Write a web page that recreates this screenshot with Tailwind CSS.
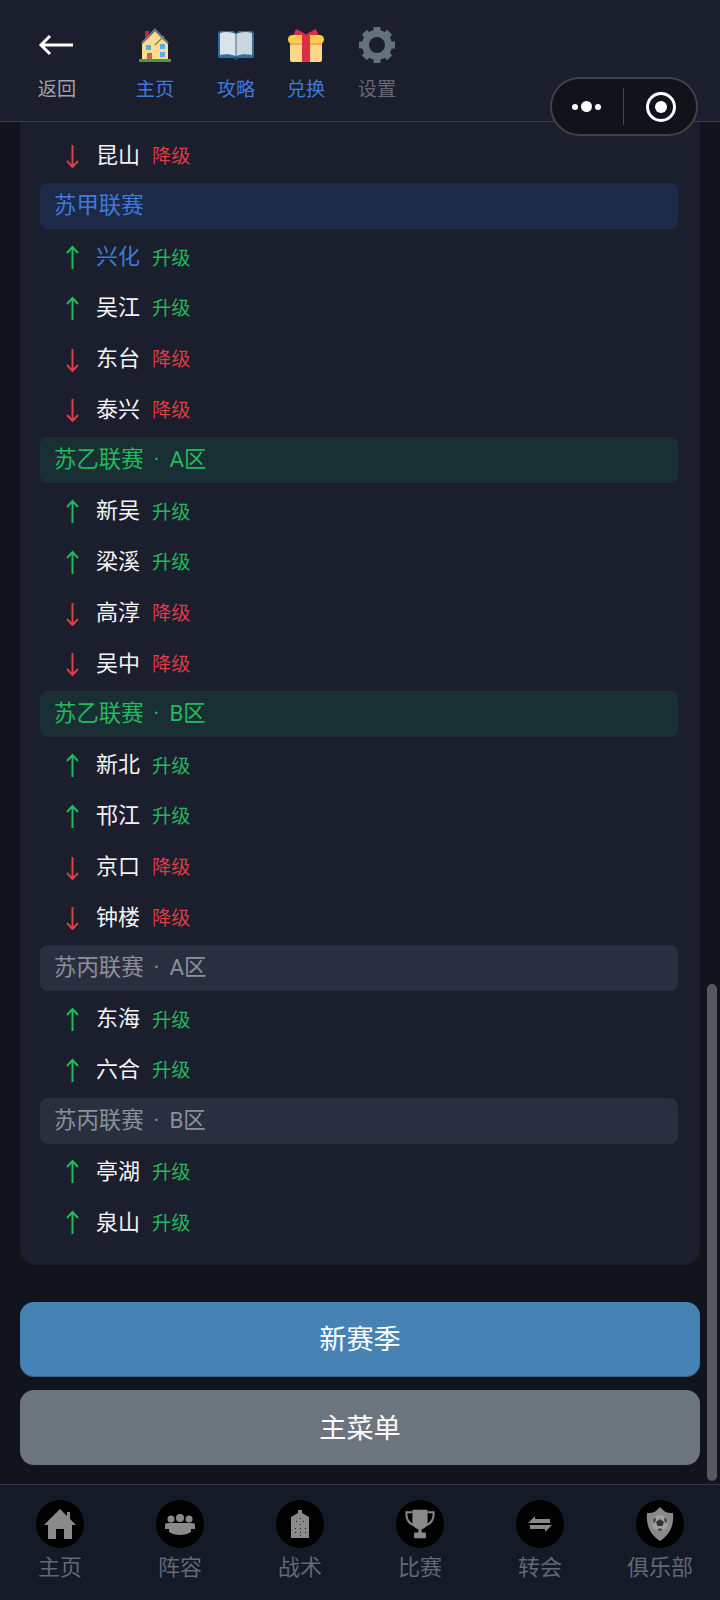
<!DOCTYPE html>
<html lang="zh-CN">
<head>
  <meta charset="UTF-8">
  <meta name="viewport" content="width=device-width, initial-scale=1.0">
  <title>赛季结算</title>
  <script src="https://cdn.jsdelivr.net/npm/@tailwindcss/browser@4"></script>
</head>
<body class="bg-[#11141c] font-['Roboto','Noto_Sans_CJK_SC',sans-serif]">
  <div class="relative w-[720px] h-[1600px] overflow-hidden flex flex-col">

    <!-- top bar -->
    <header class="h-[122px] shrink-0 bg-[#1a1e2d] border-b border-[#3a3e4b] flex items-start pt-[26px] pl-[37px]">
      <div class="w-[40px] flex flex-col items-center">
        <svg class="h-[38px] w-[40px]" viewBox="0 0 40 38" fill="none" stroke="#fff" stroke-width="3"><path d="M4 19H36M13 10L4 19L13 28"/></svg>
        <span class="mt-[14px] text-[19.2px] leading-[24px] text-[#9ea1ab]">返回</span>
      </div>
      <div class="ml-[58px] w-[40px] flex flex-col items-center">
        <svg class="h-[38px] w-[40px]" viewBox="0 0 40 38">
          <path d="M10 5h4v8h-4z" fill="#c0273d"/>
          <path d="M7 16L20 3L33 16V33H7z" fill="#ffdc8e"/>
          <path d="M6 17L20 2L34 17L32.500 18L20 5.500L7.500 18z" fill="#66757f"/>
          <path d="M20 19L29 10" stroke="#8a7f6a" stroke-width="1.500"/>
          <path d="M11 19h5v5h-5zM25 18h5v5h-5zM25 26h5v5h-5z" fill="#55acee"/>
          <path d="M12 27h5v7h-5z" fill="#c1694f"/>
          <path d="M4 33h32v3H4z" fill="#5c913b"/>
        </svg>
        <span class="mt-[14px] text-[19.2px] leading-[24px] text-[#3f79dc]">主页</span>
      </div>
      <div class="ml-[41px] w-[40px] flex flex-col items-center">
        <svg class="h-[38px] w-[40px]" viewBox="0 0 40 38">
          <path d="M2 8C2 6 3 5 5 5H17L20 7L23 5H35C37 5 38 6 38 8V30C38 31 37 32 36 32H23L20 34L17 32H4C3 32 2 31 2 30z" fill="#2f6f9f"/>
          <path d="M4 7C10 5 16 6 19.500 8V30C15 28 9 28 4 29z" fill="#dbe3ea"/>
          <path d="M36 7C30 5 24 6 20.500 8V30C25 28 31 28 36 29z" fill="#ccd6dd"/>
          <path d="M18 31h4v2h-4z" fill="#1f4f70"/>
        </svg>
        <span class="mt-[14px] text-[19.2px] leading-[24px] text-[#3f79dc]">攻略</span>
      </div>
      <div class="ml-[30px] w-[40px] flex flex-col items-center">
        <svg class="h-[38px] w-[40px]" viewBox="0 0 40 38">
          <path d="M7 10L10 3L18 7L20 9L22 7L30 3L33 10z" fill="#dd2e44"/>
          <rect x="4" y="15" width="32" height="21" rx="2" fill="#fdd888"/>
          <rect x="2" y="9" width="36" height="9" rx="4.500" fill="#ffcc4d"/>
          <rect x="4" y="17" width="32" height="2" fill="#f4a94e"/>
          <rect x="16" y="9" width="8" height="27" fill="#dd2e44"/>
        </svg>
        <span class="mt-[14px] text-[19.2px] leading-[24px] text-[#3f79dc]">兑换</span>
      </div>
      <div class="ml-[31px] w-[40px] flex flex-col items-center">
        <svg class="h-[38px] w-[40px]" viewBox="0 0 40 38" fill="none" stroke="#66717e">
          <circle cx="20" cy="19" r="11.500" stroke-width="7"/>
          <path d="M20 1V8M20 30V37M2 19H9M31 19H38M7.300 6.300L12 11M28 27L32.700 31.700M7.300 31.700L12 27M28 11L32.700 6.300" stroke-width="7"/>
        </svg>
        <span class="mt-[14px] text-[19.2px] leading-[24px] text-[#646975]">设置</span>
      </div>
    </header>

    <!-- wechat capsule -->
    <div class="absolute left-[550px] top-[77px] w-[148px] h-[59px] rounded-full bg-[#10131a] border-2 border-[#3f424b] flex items-center">
      <div class="w-[71px] pr-[3px] flex items-center justify-center gap-[3px]">
        <span class="size-[6px] rounded-full bg-white"></span>
        <span class="size-[11px] rounded-full bg-white"></span>
        <span class="size-[6px] rounded-full bg-white"></span>
      </div>
      <div class="w-px h-[37px] bg-[#45484f]"></div>
      <div class="flex-1 pl-[2px] flex justify-center">
        <div class="size-[30px] rounded-full border-[3px] border-white flex items-center justify-center">
          <span class="size-[12px] rounded-full bg-white"></span>
        </div>
      </div>
    </div>

    <!-- scrolled content -->
    <main class="flex-1 min-h-0 px-[20px] flex flex-col">
      <section class="bg-[#1a1e2d] rounded-b-[16px] pl-[20px] pr-[22px] pt-[8px] pb-[17px]">
        <div class="h-[50.8px] flex items-center pl-[26px]">
          <svg class="w-[13px] h-[24px] translate-y-[1px]" viewBox="0 0 13 24" fill="none" stroke="#dc3d46" stroke-width="2"><path d="M6.500 1V22.500M1 17L6.500 23L12 17"/></svg>
          <span class="ml-[17px] text-[22px] text-[#f4f4f6]">昆山</span>
          <span class="ml-[12px] text-[19.2px] translate-y-[2px] text-[#dc3d46]">降级</span>
        </div>

        <div class="h-[50.8px] flex items-center"><div class="w-full h-[46px] rounded-[8px] bg-[#1d2a47] px-[14px] flex items-center text-[22.4px] text-[#3f79dc]">苏甲联赛</div></div>
        <div class="h-[50.8px] flex items-center pl-[26px]">
          <svg class="w-[13px] h-[24px]" viewBox="0 0 13 24" fill="none" stroke="#22b95c" stroke-width="2"><path d="M6.500 24V2M1 8L6.500 2L12 8"/></svg>
          <span class="ml-[17px] text-[22px] text-[#3f79dc]">兴化</span>
          <span class="ml-[12px] text-[19.2px] translate-y-[2px] text-[#22b95c]">升级</span>
        </div>
        <div class="h-[50.8px] flex items-center pl-[26px]">
          <svg class="w-[13px] h-[24px]" viewBox="0 0 13 24" fill="none" stroke="#22b95c" stroke-width="2"><path d="M6.500 24V2M1 8L6.500 2L12 8"/></svg>
          <span class="ml-[17px] text-[22px] text-[#f4f4f6]">吴江</span>
          <span class="ml-[12px] text-[19.2px] translate-y-[2px] text-[#22b95c]">升级</span>
        </div>
        <div class="h-[50.8px] flex items-center pl-[26px]">
          <svg class="w-[13px] h-[24px] translate-y-[1px]" viewBox="0 0 13 24" fill="none" stroke="#dc3d46" stroke-width="2"><path d="M6.500 1V22.500M1 17L6.500 23L12 17"/></svg>
          <span class="ml-[17px] text-[22px] text-[#f4f4f6]">东台</span>
          <span class="ml-[12px] text-[19.2px] translate-y-[2px] text-[#dc3d46]">降级</span>
        </div>
        <div class="h-[50.8px] flex items-center pl-[26px]">
          <svg class="w-[13px] h-[24px] translate-y-[1px]" viewBox="0 0 13 24" fill="none" stroke="#dc3d46" stroke-width="2"><path d="M6.500 1V22.500M1 17L6.500 23L12 17"/></svg>
          <span class="ml-[17px] text-[22px] text-[#f4f4f6]">泰兴</span>
          <span class="ml-[12px] text-[19.2px] translate-y-[2px] text-[#dc3d46]">降级</span>
        </div>

        <div class="h-[50.8px] flex items-center"><div class="w-full h-[46px] rounded-[8px] bg-[#1a2f33] px-[14px] flex items-center text-[22.4px] text-[#22b95c]"><span>苏乙联赛</span><span class="mx-[10px]">·</span><span>A区</span></div></div>
        <div class="h-[50.8px] flex items-center pl-[26px]">
          <svg class="w-[13px] h-[24px]" viewBox="0 0 13 24" fill="none" stroke="#22b95c" stroke-width="2"><path d="M6.500 24V2M1 8L6.500 2L12 8"/></svg>
          <span class="ml-[17px] text-[22px] text-[#f4f4f6]">新吴</span>
          <span class="ml-[12px] text-[19.2px] translate-y-[2px] text-[#22b95c]">升级</span>
        </div>
        <div class="h-[50.8px] flex items-center pl-[26px]">
          <svg class="w-[13px] h-[24px]" viewBox="0 0 13 24" fill="none" stroke="#22b95c" stroke-width="2"><path d="M6.500 24V2M1 8L6.500 2L12 8"/></svg>
          <span class="ml-[17px] text-[22px] text-[#f4f4f6]">梁溪</span>
          <span class="ml-[12px] text-[19.2px] translate-y-[2px] text-[#22b95c]">升级</span>
        </div>
        <div class="h-[50.8px] flex items-center pl-[26px]">
          <svg class="w-[13px] h-[24px] translate-y-[1px]" viewBox="0 0 13 24" fill="none" stroke="#dc3d46" stroke-width="2"><path d="M6.500 1V22.500M1 17L6.500 23L12 17"/></svg>
          <span class="ml-[17px] text-[22px] text-[#f4f4f6]">高淳</span>
          <span class="ml-[12px] text-[19.2px] translate-y-[2px] text-[#dc3d46]">降级</span>
        </div>
        <div class="h-[50.8px] flex items-center pl-[26px]">
          <svg class="w-[13px] h-[24px] translate-y-[1px]" viewBox="0 0 13 24" fill="none" stroke="#dc3d46" stroke-width="2"><path d="M6.500 1V22.500M1 17L6.500 23L12 17"/></svg>
          <span class="ml-[17px] text-[22px] text-[#f4f4f6]">吴中</span>
          <span class="ml-[12px] text-[19.2px] translate-y-[2px] text-[#dc3d46]">降级</span>
        </div>

        <div class="h-[50.8px] flex items-center"><div class="w-full h-[46px] rounded-[8px] bg-[#1a2f33] px-[14px] flex items-center text-[22.4px] text-[#22b95c]"><span>苏乙联赛</span><span class="mx-[10px]">·</span><span>B区</span></div></div>
        <div class="h-[50.8px] flex items-center pl-[26px]">
          <svg class="w-[13px] h-[24px]" viewBox="0 0 13 24" fill="none" stroke="#22b95c" stroke-width="2"><path d="M6.500 24V2M1 8L6.500 2L12 8"/></svg>
          <span class="ml-[17px] text-[22px] text-[#f4f4f6]">新北</span>
          <span class="ml-[12px] text-[19.2px] translate-y-[2px] text-[#22b95c]">升级</span>
        </div>
        <div class="h-[50.8px] flex items-center pl-[26px]">
          <svg class="w-[13px] h-[24px]" viewBox="0 0 13 24" fill="none" stroke="#22b95c" stroke-width="2"><path d="M6.500 24V2M1 8L6.500 2L12 8"/></svg>
          <span class="ml-[17px] text-[22px] text-[#f4f4f6]">邗江</span>
          <span class="ml-[12px] text-[19.2px] translate-y-[2px] text-[#22b95c]">升级</span>
        </div>
        <div class="h-[50.8px] flex items-center pl-[26px]">
          <svg class="w-[13px] h-[24px] translate-y-[1px]" viewBox="0 0 13 24" fill="none" stroke="#dc3d46" stroke-width="2"><path d="M6.500 1V22.500M1 17L6.500 23L12 17"/></svg>
          <span class="ml-[17px] text-[22px] text-[#f4f4f6]">京口</span>
          <span class="ml-[12px] text-[19.2px] translate-y-[2px] text-[#dc3d46]">降级</span>
        </div>
        <div class="h-[50.8px] flex items-center pl-[26px]">
          <svg class="w-[13px] h-[24px] translate-y-[1px]" viewBox="0 0 13 24" fill="none" stroke="#dc3d46" stroke-width="2"><path d="M6.500 1V22.500M1 17L6.500 23L12 17"/></svg>
          <span class="ml-[17px] text-[22px] text-[#f4f4f6]">钟楼</span>
          <span class="ml-[12px] text-[19.2px] translate-y-[2px] text-[#dc3d46]">降级</span>
        </div>

        <div class="h-[50.8px] flex items-center"><div class="w-full h-[46px] rounded-[8px] bg-[#2a2f3f] px-[14px] flex items-center text-[22.4px] text-[#8b8f9b]"><span>苏丙联赛</span><span class="mx-[10px]">·</span><span>A区</span></div></div>
        <div class="h-[50.8px] flex items-center pl-[26px]">
          <svg class="w-[13px] h-[24px]" viewBox="0 0 13 24" fill="none" stroke="#22b95c" stroke-width="2"><path d="M6.500 24V2M1 8L6.500 2L12 8"/></svg>
          <span class="ml-[17px] text-[22px] text-[#f4f4f6]">东海</span>
          <span class="ml-[12px] text-[19.2px] translate-y-[2px] text-[#22b95c]">升级</span>
        </div>
        <div class="h-[50.8px] flex items-center pl-[26px]">
          <svg class="w-[13px] h-[24px]" viewBox="0 0 13 24" fill="none" stroke="#22b95c" stroke-width="2"><path d="M6.500 24V2M1 8L6.500 2L12 8"/></svg>
          <span class="ml-[17px] text-[22px] text-[#f4f4f6]">六合</span>
          <span class="ml-[12px] text-[19.2px] translate-y-[2px] text-[#22b95c]">升级</span>
        </div>

        <div class="h-[50.8px] flex items-center"><div class="w-full h-[46px] rounded-[8px] bg-[#2a2f3f] px-[14px] flex items-center text-[22.4px] text-[#8b8f9b]"><span>苏丙联赛</span><span class="mx-[10px]">·</span><span>B区</span></div></div>
        <div class="h-[50.8px] flex items-center pl-[26px]">
          <svg class="w-[13px] h-[24px]" viewBox="0 0 13 24" fill="none" stroke="#22b95c" stroke-width="2"><path d="M6.500 24V2M1 8L6.500 2L12 8"/></svg>
          <span class="ml-[17px] text-[22px] text-[#f4f4f6]">亭湖</span>
          <span class="ml-[12px] text-[19.2px] translate-y-[2px] text-[#22b95c]">升级</span>
        </div>
        <div class="h-[50.8px] flex items-center pl-[26px]">
          <svg class="w-[13px] h-[24px]" viewBox="0 0 13 24" fill="none" stroke="#22b95c" stroke-width="2"><path d="M6.500 24V2M1 8L6.500 2L12 8"/></svg>
          <span class="ml-[17px] text-[22px] text-[#f4f4f6]">泉山</span>
          <span class="ml-[12px] text-[19.2px] translate-y-[2px] text-[#22b95c]">升级</span>
        </div>
      </section>

      <button class="mt-[37px] h-[75px] shrink-0 rounded-[14px] bg-[#4682b4] border-b border-[#35668f] pt-[4px] text-white text-[27.2px]">新赛季</button>
      <button class="mt-[13px] h-[75px] shrink-0 rounded-[14px] bg-[#6c757d] pt-[4px] text-white text-[27.2px]">主菜单</button>
    </main>

    <!-- scrollbar -->
    <div class="absolute left-[707px] top-[984px] w-[10px] h-[497px] rounded-full bg-[#56585f]"></div>

    <!-- bottom nav -->
    <nav class="h-[116px] shrink-0 bg-[#151a28] border-t border-[#2e3550] grid grid-cols-6 pt-[15px]">
      <div class="flex flex-col items-center">
        <div class="size-[48px] rounded-full bg-black flex items-center justify-center">
          <svg class="size-[32px]" viewBox="0 0 32 32" fill="#8a8a8a"><path d="M16 1L23 8V4H26V11L32 17H28V31H20V21H12V31H4V17H0z"/></svg>
        </div>
        <span class="mt-[4px] text-[22px] leading-[32px] text-[#626877]">主页</span>
      </div>
      <div class="flex flex-col items-center">
        <div class="size-[48px] rounded-full bg-black flex items-center justify-center">
          <svg class="size-[32px]" viewBox="0 0 32 32" fill="#8a8a8a"><circle cx="7" cy="11" r="3.500"/><circle cx="16" cy="10" r="4"/><circle cx="25" cy="11" r="3.500"/><path d="M1 17C1 15 4 15 7 15C10 15 12 15 16 15C20 15 22 15 25 15C28 15 31 15 31 17V21H27V24C24 26 20 27 16 27C12 27 8 26 5 24V21H1z"/></svg>
        </div>
        <span class="mt-[4px] text-[22px] leading-[32px] text-[#626877]">阵容</span>
      </div>
      <div class="flex flex-col items-center">
        <div class="size-[48px] rounded-full bg-black flex items-center justify-center">
          <svg class="size-[32px]" viewBox="0 0 32 32"><path d="M14 2H18V5L25 9V30H7V9L14 5z" fill="#8a8a8a"/><path d="M16 10h1v1h-1zM12 13h1v1h-1zM19 13h1v1h-1zM16 16h1v1h-1zM11 20h1v1h-1zM16 20h1v1h-1zM21 20h1v1h-1zM11 24h1v1h-1zM16 24h1v1h-1zM21 24h1v1h-1zM16 27h1v1h-1z" fill="#222"/></svg>
        </div>
        <span class="mt-[4px] text-[22px] leading-[32px] text-[#626877]">战术</span>
      </div>
      <div class="flex flex-col items-center">
        <div class="size-[48px] rounded-full bg-black flex items-center justify-center">
          <svg class="size-[32px]" viewBox="0 0 38 38" fill="#8a8a8a"><path d="M10 2H28V16C28 21 24 25 21 25V29H26V36H12V29H17V25C14 25 10 21 10 16z"/><path d="M10 5H3C2 13 6 19 13 21M28 5H35C36 13 32 19 25 21" fill="none" stroke="#8a8a8a" stroke-width="2.500"/></svg>
        </div>
        <span class="mt-[4px] text-[22px] leading-[32px] text-[#626877]">比赛</span>
      </div>
      <div class="flex flex-col items-center">
        <div class="size-[48px] rounded-full bg-black flex items-center justify-center">
          <svg class="w-[24px] h-[16px]" viewBox="0 0 24 16" fill="#8a8a8a"><path d="M7 0V3H22V7H0z"/><path d="M2 9H24L17 16V13H2z"/></svg>
        </div>
        <span class="mt-[4px] text-[22px] leading-[32px] text-[#626877]">转会</span>
      </div>
      <div class="flex flex-col items-center">
        <div class="size-[48px] rounded-full bg-black flex items-center justify-center">
          <svg class="size-[36px]" viewBox="0 0 36 36"><path d="M18 1L22 5C25 7 28 7 31 7C32 18 29 28 18 35C7 28 4 18 5 7C8 7 11 7 14 5z" fill="#8a8a8a"/><circle cx="18" cy="17" r="8" fill="#a0a0a0"/><path d="M18 13L22 16L20.500 20H15.500L14 16z" fill="#333"/><path d="M11 14L13 11L14 14L12 18zM25 14L23 11L22 14L24 18zM15 24L18 22L21 24L18 25z" fill="#444"/></svg>
        </div>
        <span class="mt-[4px] text-[22px] leading-[32px] text-[#626877]">俱乐部</span>
      </div>
    </nav>
  </div>
</body>
</html>
